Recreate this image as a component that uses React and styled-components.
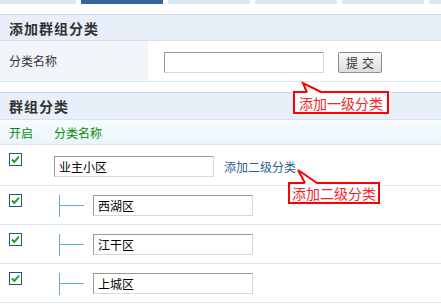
import React from 'react';
import styled, { createGlobalStyle } from 'styled-components';

const Global = createGlobalStyle`
  html, body { margin: 0; padding: 0; background: #fff; }
  body {
    font-family: "Noto Sans CJK SC", "Liberation Sans", sans-serif;
    font-size: 12px;
    color: #333;
  }
  * { box-sizing: border-box; }
`;

const Page = styled.div`
  position: relative;
  width: 441px;
  height: 307px;
  overflow: hidden;
  background: #fff;
`;

const Tabs = styled.div`
  display: flex;
  gap: 5px;
  height: 4px;
  margin-left: -6px;
`;

const Tab = styled.div`
  flex: 0 0 82px;
  background: ${(p) => (p.$active ? '#336699' : '#dce7f4')};
`;

const Section = styled.section`
  margin-top: 10px;
`;

const SectionHead = styled.div`
  height: ${(p) => p.$h}px;
  border-top: 1px solid #c6daee;
  border-bottom: 1px solid #d3e2f1;
  background: #e8eff8;
  padding-left: 9px;
  display: flex;
  align-items: center;
  font-size: 14px;
  font-weight: bold;
  letter-spacing: 1px;
  color: #333;
`;

const FormRow = styled.div`
  display: flex;
  height: 41px;
  border-bottom: 1px solid #dbe7f3;
`;

const LabelCell = styled.div`
  width: 148px;
  background: #f2f6fb;
  padding-left: 9px;
  display: flex;
  align-items: center;
  padding-bottom: 2px;
`;

const FieldCell = styled.div`
  flex: 1;
  display: flex;
  align-items: flex-start;
  padding: 11px 0 0 16px;
  gap: 14px;
`;

const TextInput = styled.div`
  width: ${(p) => p.$w || 160}px;
  height: 21px;
  border: 1px solid;
  border-color: #9a9a9a #d8d8d8 #d8d8d8 #9a9a9a;
  background: #fff;
  padding-left: 4px;
  display: flex;
  align-items: center;
  font-size: 12px;
  color: #000;
`;

const Button = styled.div`
  width: 44px;
  height: 21px;
  border: 1px solid #8c8c8c;
  border-radius: 2px;
  background: linear-gradient(#fbfbfb, #dcdcdc);
  display: flex;
  align-items: center;
  justify-content: center;
  font-size: 12px;
  color: #333;
  letter-spacing: 4px;
  padding-left: 4px;
`;

const ColHead = styled.div`
  display: flex;
  align-items: center;
  height: 25px;
  border-bottom: 1px solid #d6e5f1;
  background: linear-gradient(#f8fcfe, #e9f4fa);
  padding-left: 9px;
  color: #0b8a0b;
  font-size: 12px;
`;

const ColCheck = styled.div`
  width: 45px;
`;

const Row = styled.div`
  display: flex;
  align-items: flex-start;
  height: ${(p) => p.$h}px;
  border-bottom: 1px solid #dbe7f3;
  padding-left: 9px;
`;

const CheckCell = styled.div`
  width: 45px;
  padding-top: 8px;
  display: flex;
`;

const NameCell = styled.div`
  display: flex;
  align-items: center;
  padding-top: ${(p) => p.$top}px;
`;

const Link = styled.span`
  margin-left: 10px;
  color: #2e5f8e;
  font-size: 12px;
`;

const Connector = styled.span`
  position: relative;
  display: block;
  width: 24px;
  height: 22px;
  margin: 1px 10px 0 5px;
  border-left: 1px solid #62afc6;
  &::after {
    content: '';
    position: absolute;
    left: 0;
    top: 10px;
    width: 24px;
    height: 1px;
    background: #62afc6;
  }
`;

const Callout = styled.div`
  position: absolute;
  left: ${(p) => p.$x}px;
  top: ${(p) => p.$y}px;
  width: ${(p) => p.$w}px;
  height: ${(p) => p.$h}px;
  border: 2px solid #ff0000;
  background: #fff;
  color: #f0252a;
  font-size: 14px;
  display: flex;
  align-items: center;
  justify-content: center;
  z-index: 2;
`;

const Tail = styled.svg`
  position: absolute;
  left: ${(p) => p.$x}px;
  top: ${(p) => p.$y}px;
  z-index: 3;
  overflow: visible;
`;

const CheckBox = () => (
  <svg width="13" height="13" viewBox="0 0 13 13">
    <rect x="0.5" y="0.5" width="12" height="12" fill="#fff" stroke="#1f5585" />
    <path d="M3 6.5 L5.3 9 L10 3.6" fill="none" stroke="#22a322" strokeWidth="2" />
  </svg>
);

const children = ['西湖区', '江干区', '上城区'];

export default function App() {
  return (
    <Page>
      <Global />
      <Tabs>
        {[0, 1, 2, 3, 4, 5].map((i) => (
          <Tab key={i} $active={i === 1} />
        ))}
      </Tabs>

      <Section>
        <SectionHead $h={27}>添加群组分类</SectionHead>
        <FormRow>
          <LabelCell>分类名称</LabelCell>
          <FieldCell>
            <TextInput />
            <Button>提交</Button>
          </FieldCell>
        </FormRow>
      </Section>

      <Section>
        <SectionHead $h={28}>群组分类</SectionHead>
        <ColHead>
          <ColCheck>开启</ColCheck>
          <span>分类名称</span>
        </ColHead>
        <Row $h={41}>
          <CheckCell>
            <CheckBox />
          </CheckCell>
          <NameCell $top={11}>
            <TextInput>业主小区</TextInput>
            <Link>添加二级分类</Link>
          </NameCell>
        </Row>
        {children.map((name) => (
          <Row key={name} $h={39}>
            <CheckCell>
              <CheckBox />
            </CheckCell>
            <NameCell $top={8}>
              <Connector />
              <TextInput>{name}</TextInput>
            </NameCell>
          </Row>
        ))}
      </Section>

      <Callout $x={293} $y={91} $w={96} $h={23}>添加一级分类</Callout>
      <Tail $x={300} $y={82} width="24" height="12">
        <polygon points="3,1 7,11 21,11" fill="#fff" />
        <polyline points="7,10.5 3,1 21,10" fill="none" stroke="#ff0000" strokeWidth="2" />
      </Tail>

      <Callout $x={288} $y={182} $w={92} $h={22}>添加二级分类</Callout>
      <Tail $x={295} $y={168} width="26" height="16">
        <polygon points="3,2 10,16 22,16" fill="#fff" />
        <polyline points="10,15 3,2 22,15" fill="none" stroke="#ff0000" strokeWidth="2" />
      </Tail>
    </Page>
  );
}
